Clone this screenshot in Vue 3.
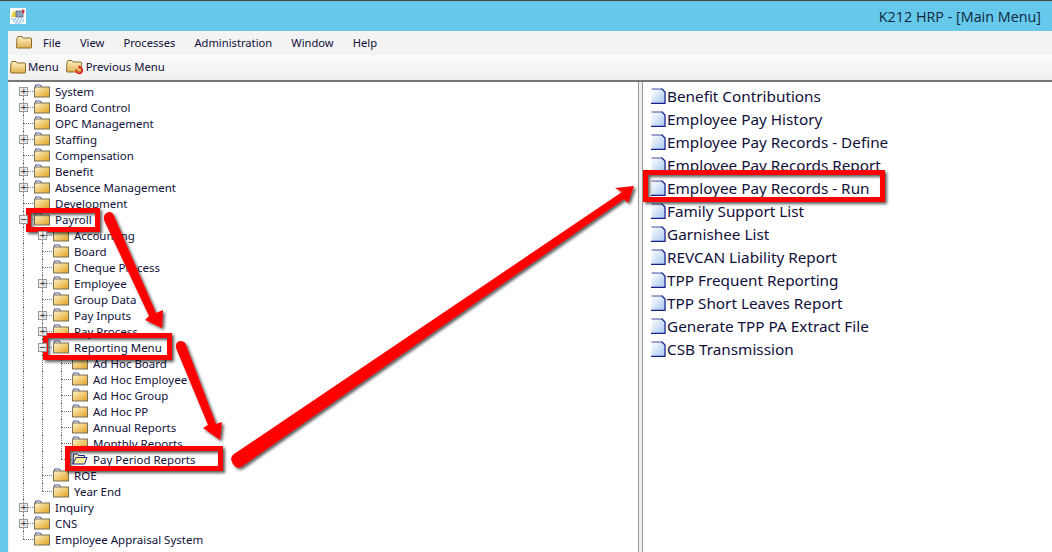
<template>
  <div class="window">
    <header class="titlebar">
      <svg class="app-icon" width="16" height="16" viewBox="0 0 16 16">
        <rect width="16" height="16" fill="#fff" />
        <path d="M1 9 4 2l4 7z" fill="#e6d23c" />
        <rect x="6" y="3" width="7" height="6" fill="#8fa0bd" stroke="#44506a" stroke-width=".7" />
        <path d="M12 1l3 2-2 3z" fill="#e02020" />
        <path d="M1 11h13M3 13h11M5 15h7" stroke="#5a9fe6" stroke-width="1.200" stroke-dasharray="2 1" />
      </svg>
      <span class="title">K212 HRP - [Main Menu]</span>
    </header>
    <div class="frame">
      <nav class="menubar">
        <svg class="folder-lg" width="16" height="14" viewBox="0 0 16 14">
          <path d="M1 3.500 2 1.500h4l1 1.500h7.500q1 0 1 1v8q0 1-1 1h-13q-1 0-1-1z" fill="url(#fg)" stroke="#8a6a2a" />
        </svg>
        <span v-for="m in menus" :key="m" class="menu-item">{{ m }}</span>
      </nav>
      <div class="toolbar">
        <span class="tool">
          <svg width="16" height="14" viewBox="0 0 16 14">
            <path d="M1 3.500 2 1.500h4l1 1.500h7.500q1 0 1 1v8q0 1-1 1h-13q-1 0-1-1z" fill="url(#fg)" stroke="#8a6a2a" />
          </svg>
          Menu
        </span>
        <span class="tool">
          <svg width="18" height="16" viewBox="0 0 18 16">
            <path d="M1 3.500 2 1.500h4l1 1.500h7.500q1 0 1 1v8q0 1-1 1h-13q-1 0-1-1z" fill="url(#fg)" stroke="#8a6a2a" />
            <path d="M14 8.500a3 3 0 1 1-3.500 2" fill="none" stroke="#e01818" stroke-width="1.600" />
            <path d="M12 6.500l3 1-2 2.500z" fill="#e01818" />
          </svg>
          Previous Menu
        </span>
      </div>
      <div class="panes">
        <div class="tree">
          <div v-for="row in rows" :key="row.label" class="tree-row">
            <span
              v-for="(g, i) in row.guides"
              :key="i"
              class="guide"
              :class="g"
            ></span>
            <span class="expander-col" :class="row.link">
              <span v-if="row.exp" class="expander">{{ row.exp }}</span>
            </span>
            <svg class="folder" width="16" height="14" viewBox="0 0 16 14">
              <template v-if="row.open">
                <path d="M1 12 1.500 2h4l1 1.500h6v2" fill="#fdf3b0" stroke="#1c2a90" />
                <path d="M1 12 4 5.500h11L12.500 12z" fill="#fdf09a" stroke="#1c2a90" />
              </template>
              <template v-else>
                <path d="M1.500 3V1h5l1 2" fill="#fff" stroke="#1c2a90" stroke-width=".8" />
                <rect x=".5" y="3" width="15" height="10" fill="url(#ft)" stroke="#77705a" />
              </template>
            </svg>
            <span class="tree-label">{{ row.label }}</span>
          </div>
        </div>
        <div class="splitter"></div>
        <ul class="reports">
          <li v-for="r in reports" :key="r" class="report">
            <svg width="16" height="16" viewBox="0 0 16 16">
              <path d="M1.500 1h10l3 3v11h-13z" fill="url(#dg)" />
              <path d="M11.500 .500l3.500 3.500v11.500H1" fill="none" stroke="#14208c" stroke-width="1.300" />
              <path d="M1.500 1h10" stroke="#14208c" stroke-width=".8" />
            </svg>
            <span>{{ r }}</span>
          </li>
        </ul>
      </div>
    </div>

    <svg class="annotations" width="1052" height="552" viewBox="0 0 1052 552">
      <defs>
        <linearGradient id="fg" x1="0" y1="0" x2="0" y2="1">
          <stop offset="0" stop-color="#fff3c4" />
          <stop offset="1" stop-color="#e0b050" />
        </linearGradient>
        <linearGradient id="ft" x1="0" y1="0" x2="1" y2="1">
          <stop offset="0" stop-color="#fff6c8" />
          <stop offset="1" stop-color="#e2a020" />
        </linearGradient>
        <linearGradient id="dg" x1="0" y1="0" x2="1" y2="1">
          <stop offset="0" stop-color="#ffffff" />
          <stop offset="1" stop-color="#a8c8f0" />
        </linearGradient>
        <filter id="shadow" x="-10%" y="-10%" width="120%" height="120%">
          <feDropShadow dx="2" dy="2" stdDeviation="1.500" flood-color="#000" flood-opacity=".65" />
        </filter>
      </defs>
      <g filter="url(#shadow)">
        <rect v-for="b in boxes" :key="b.x" :x="b.x" :y="b.y" :width="b.w" :height="b.h" fill="none" stroke="#ff0000" stroke-width="5" />
        <path d="M104 220 Q103 213 109 212 Q113 212 114 216 L156 313 L163 310 L162 328 L145 320 L149 316 Z" fill="#ff0000" />
        <path d="M176 348 Q175 342 180 341 Q185 341 186 345 L216 424 L222 422 L220 440 L203 428 L208 425 Z" fill="#ff0000" />
        <path d="M231 459 Q231 456 234 454 L622 192 L615 188 L634 186 L628 203 L624 199 L241 467 Q234 470 231 459 Z" fill="#ff0000" />
      </g>
    </svg>
  </div>
</template>

<script setup>
const menus = ['File', 'View', 'Processes', 'Administration', 'Window', 'Help']

const tree = [
  { label: 'System', exp: '+' },
  { label: 'Board Control', exp: '+' },
  { label: 'OPC Management' },
  { label: 'Staffing', exp: '+' },
  { label: 'Compensation' },
  { label: 'Benefit', exp: '+' },
  { label: 'Absence Management', exp: '+' },
  { label: 'Development' },
  {
    label: 'Payroll',
    exp: '−',
    children: [
      { label: 'Accounting', exp: '+' },
      { label: 'Board' },
      { label: 'Cheque Process' },
      { label: 'Employee', exp: '+' },
      { label: 'Group Data' },
      { label: 'Pay Inputs', exp: '+' },
      { label: 'Pay Process', exp: '+' },
      {
        label: 'Reporting Menu',
        exp: '−',
        children: [
          { label: 'Ad Hoc Board' },
          { label: 'Ad Hoc Employee' },
          { label: 'Ad Hoc Group' },
          { label: 'Ad Hoc PP' },
          { label: 'Annual Reports' },
          { label: 'Monthly Reports' },
          { label: 'Pay Period Reports', open: true },
        ],
      },
      { label: 'ROE' },
      { label: 'Year End' },
    ],
  },
  { label: 'Inquiry', exp: '+' },
  { label: 'CNS', exp: '+' },
  { label: 'Employee Appraisal System' },
]

// flatten the tree and work out which dotted lines each row needs
function flatten(nodes, guides) {
  const out = []
  nodes.forEach((n, i) => {
    const last = i === nodes.length - 1
    const link = last ? 'end' : guides.length === 0 && i === 0 ? 'start' : 'tee'
    out.push({ ...n, guides, link })
    if (n.children) out.push(...flatten(n.children, [...guides, last ? 'blank' : 'line']))
  })
  return out
}
const rows = flatten(tree, [])

const reports = [
  'Benefit Contributions',
  'Employee Pay History',
  'Employee Pay Records - Define',
  'Employee Pay Records Report',
  'Employee Pay Records - Run',
  'Family Support List',
  'Garnishee List',
  'REVCAN Liability Report',
  'TPP Frequent Reporting',
  'TPP Short Leaves Report',
  'Generate TPP PA Extract File',
  'CSB Transmission',
]

const boxes = [
  { x: 28.5, y: 210.5, w: 69, h: 19 },
  { x: 45.5, y: 335.5, w: 124, h: 22 },
  { x: 67.5, y: 448.5, w: 153, h: 20 },
  { x: 645.5, y: 172.5, w: 237, h: 27 },
]
</script>

<style>
html,
body {
  margin: 0;
  background: #66c9ec;
}
</style>

<style scoped>
.window {
  position: relative;
  width: 1052px;
  height: 552px;
  overflow: hidden;
  box-sizing: border-box;
  border-top: 1px solid #444;
  background: #66c9ec;
  font-family: "Noto Sans", "Open Sans", sans-serif;
  color: #10103a;
}

.titlebar {
  display: flex;
  align-items: center;
  justify-content: space-between;
  height: 30px;
  padding: 0 11px 0 10px;
}
.title {
  font-family: "Open Sans", sans-serif;
  font-size: 14.350px;
  color: #10283c;
}

.frame {
  margin-left: 8px;
  background: #f3f3f3;
  height: 521px;
}

.menubar {
  display: flex;
  align-items: center;
  height: 22px;
  padding: 0 0 2px 8px;
  font-size: 11.200px;
  background: #f3f3f3;
}
.folder-lg {
  margin-right: 11px;
}
.menu-item {
  margin-right: 19px;
}

.toolbar {
  display: flex;
  align-items: center;
  gap: 7px;
  height: 23px;
  padding: 0 0 2px 2px;
  font-size: 11.350px;
  background: linear-gradient(#fbfbfb, #f0f0f0);
  border-bottom: 2px solid #777;
}
.tool {
  display: flex;
  align-items: center;
  gap: 2px;
}

.panes {
  display: flex;
  height: 470px;
}

.tree {
  width: 628px;
  flex: none;
  margin-left: 2px;
  padding: 1px 0 0 4px;
  box-sizing: border-box;
  background: #fff;
  font-size: 11.500px;
}
.tree-row {
  display: flex;
  align-items: center;
  height: 16px;
  white-space: nowrap;
}
.guide,
.expander-col {
  position: relative;
  flex: none;
  width: 19px;
  height: 16px;
}
.guide.line::before,
.expander-col::before {
  content: "";
  position: absolute;
  left: 9px;
  top: 0;
  bottom: 0;
  border-left: 1px dotted #777;
}
.expander-col.start::before {
  top: 8px;
}
.expander-col.end::before {
  bottom: 8px;
}
.expander-col::after {
  content: "";
  position: absolute;
  left: 9px;
  right: 0;
  top: 8px;
  border-top: 1px dotted #777;
}
.expander {
  position: absolute;
  z-index: 1;
  left: 5px;
  top: 4px;
  width: 7px;
  height: 7px;
  border: 1px solid #999;
  background: #eee;
  color: #222;
  font: 9px/7px "DejaVu Sans", sans-serif;
  text-align: center;
}
.folder {
  flex: none;
  margin: 0 5px 0 1px;
}

.splitter {
  width: 5px;
  flex: none;
  background: #f0f0f0;
  border-left: 1px solid #999;
  border-right: 1px solid #999;
  box-sizing: border-box;
}

.reports {
  flex: 1;
  margin: 0;
  padding: 2px 0 0 7px;
  list-style: none;
  background: #fff;
  font-size: 15.300px;
}
.report {
  display: flex;
  align-items: center;
  gap: 1px;
  height: 23px;
  white-space: nowrap;
}

.annotations {
  position: absolute;
  left: 0;
  top: -1px;
  pointer-events: none;
}
</style>
